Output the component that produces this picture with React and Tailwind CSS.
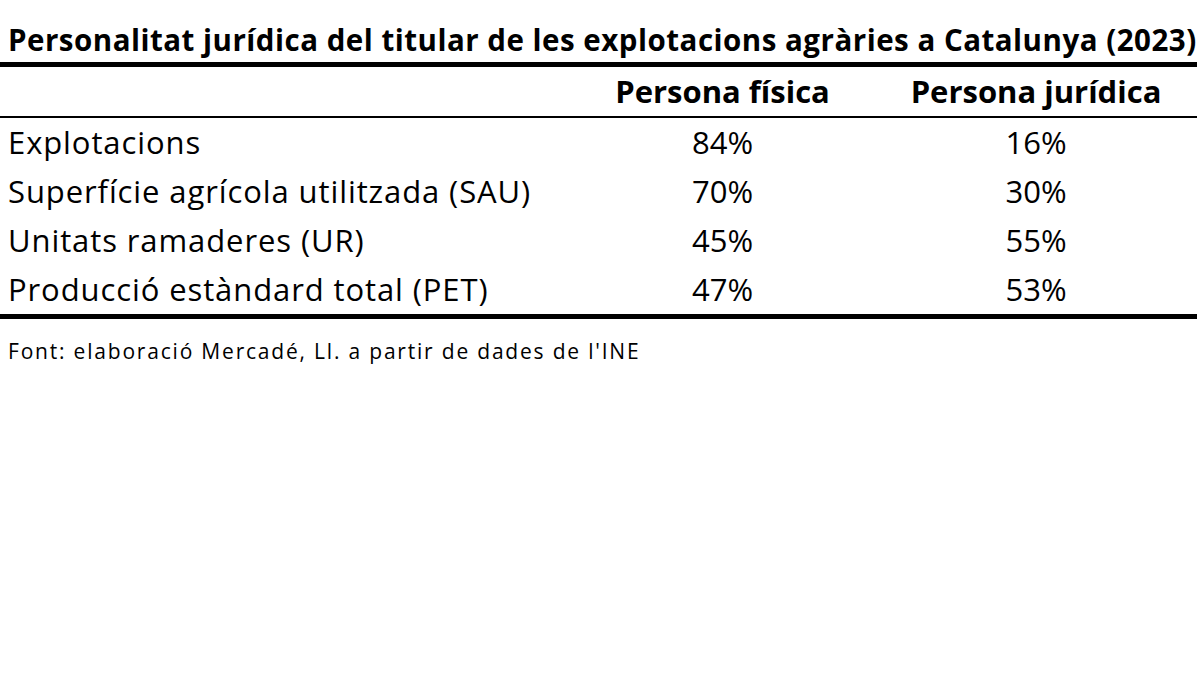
import React from 'react';

const rows = [
  { label: 'Explotacions', fisica: '84%', juridica: '16%' },
  { label: 'Superfície agrícola utilitzada (SAU)', fisica: '70%', juridica: '30%' },
  { label: 'Unitats ramaderes (UR)', fisica: '45%', juridica: '55%' },
  { label: 'Producció estàndard total (PET)', fisica: '47%', juridica: '53%' },
];

const App = () => {
  return (
    <div className="h-[675px] w-[1200px] bg-white font-['Open_Sans','Noto_Sans',sans-serif] text-black">
      <div className="w-[1197px]">
        <h1 className="flex h-[62px] items-end whitespace-nowrap pb-[5px] pl-[8px] text-[29.5px] font-bold leading-[34px] tracking-[0.5px]">
          Personalitat jurídica del titular de les explotacions agràries a Catalunya (2023)
        </h1>
        <div className="h-[5px] bg-black" />

        <div className="grid h-[49px] grid-cols-[570px_305px_1fr] items-center text-[31px] font-bold leading-none">
          <div />
          <div className="whitespace-nowrap text-center">Persona física</div>
          <div className="whitespace-nowrap text-center">Persona jurídica</div>
        </div>
        <div className="h-[2px] bg-black" />

        {rows.map((row) => (
          <div key={row.label} className="grid h-[49px] grid-cols-[570px_305px_1fr] items-center text-[31px] leading-none">
            <div className="whitespace-nowrap pl-[8px] tracking-[0.9px]">{row.label}</div>
            <div className="text-center">{row.fisica}</div>
            <div className="text-center">{row.juridica}</div>
          </div>
        ))}
        <div className="h-[5px] bg-black" />

        <p className="whitespace-nowrap pl-[8px] pt-[22px] text-[21px] leading-none tracking-[1.8px]">
          Font: elaboració Mercadé, Ll. a partir de dades de l'INE
        </p>
      </div>
    </div>
  );
};

export default App;
